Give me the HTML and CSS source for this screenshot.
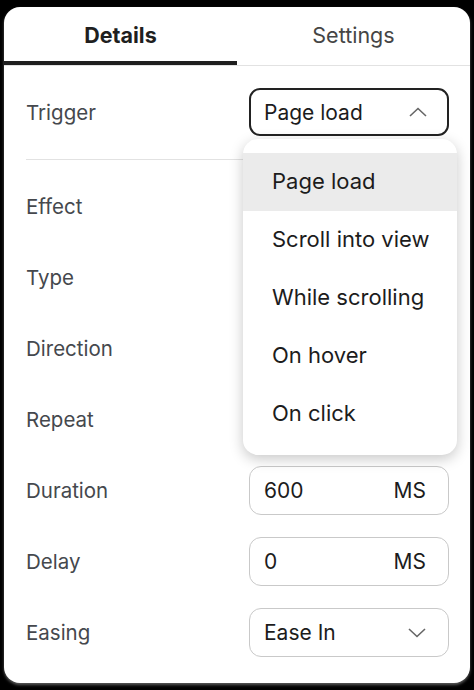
FILE: index.html
```html
<!DOCTYPE html>
<html lang="en">
<head>
    <meta charset="UTF-8">
    <title>Animation panel</title>
    <link rel="stylesheet" href="styles.css">
</head>
<body>
    <div class="panel">
        <div class="tabs">
            <div class="tab active">Details</div>
            <div class="tab">Settings</div>
        </div>

        <div class="form">
            <!-- Trigger mit offenem Menue -->
            <div class="row trigger-row">
                <span class="label">Trigger</span>
                <div class="select-wrap">
                    <div class="select open">
                        <span>Page load</span>
                        <svg class="chevron" width="18" height="10" viewBox="0 0 18 10">
                            <path d="M1 9 L9 1.5 L17 9" fill="none" stroke="#666" stroke-width="1.6"/>
                        </svg>
                    </div>
                    <ul class="menu">
                        <li class="selected">Page load</li>
                        <li>Scroll into view</li>
                        <li>While scrolling</li>
                        <li>On hover</li>
                        <li>On click</li>
                    </ul>
                </div>
            </div>

            <div class="row"><span class="label">Effect</span></div>
            <div class="row"><span class="label">Type</span></div>
            <div class="row"><span class="label">Direction</span></div>
            <div class="row"><span class="label">Repeat</span></div>

            <div class="row">
                <span class="label">Duration</span>
                <div class="field"><span>600</span><span>MS</span></div>
            </div>
            <div class="row">
                <span class="label">Delay</span>
                <div class="field"><span>0</span><span>MS</span></div>
            </div>
            <div class="row">
                <span class="label">Easing</span>
                <div class="field">
                    <span>Ease In</span>
                    <svg class="chevron" width="18" height="10" viewBox="0 0 18 10">
                        <path d="M1 1 L9 8.5 L17 1" fill="none" stroke="#666" stroke-width="1.6"/>
                    </svg>
                </div>
            </div>
        </div>
    </div>
</body>
</html>
```

FILE: styles.css
```css
body {
    margin: 0;
    padding: 7px 4px;
    background: #000;
    font-family: 'Inter', 'Roboto', sans-serif;
    color: #1c1c1c;
}
.panel {
    width: 466px;
    height: 676px;
    background: #fff;
    border-radius: 16px;
    box-shadow: 0 2px 3px rgba(255, 255, 255, 0.35);
}
.tabs {
    display: flex;
    border-bottom: 1px solid #e2e2e2;
}
.tab {
    flex: 1;
    height: 54px;
    line-height: 57px;
    text-align: center;
    font-size: 21.5px;
    color: #454545;
    border-bottom: 4px solid transparent;
}
.tab.active {
    font-weight: 700;
    color: #1f1f1f;
    border-bottom-color: #1f1f1f;
}
.form {
    padding: 0 21px 0 22px;
}
.row {
    display: flex;
    align-items: center;
    justify-content: space-between;
    height: 71px;
}
.label {
    font-size: 20.5px;
    color: #45484d;
}
.trigger-row {
    height: 48px;
    padding: 22px 0 23px;
    border-bottom: 1px solid #e2e2e2;
    margin-bottom: 11px;
}
.select-wrap {
    position: relative;
}
.select, .field {
    box-sizing: border-box;
    width: 200px;
    display: flex;
    align-items: center;
    justify-content: space-between;
    font-size: 21px;
    color: #1c1c1c;
}
.select {
    height: 48px;
    padding: 0 20px 0 13px;
    border: 2px solid #222;
    border-radius: 11px;
}
.field {
    height: 49px;
    padding: 0 22px 0 14px;
    border: 1px solid #c9c9c9;
    border-radius: 12px;
}
.chevron {
    display: block;
}
.menu {
    position: absolute;
    top: 51px;
    left: -6px;
    width: 214px;
    margin: 0;
    padding: 14px 0 12px;
    list-style: none;
    background: #fff;
    border-radius: 15px;
    box-shadow: 0 4px 14px rgba(0, 0, 0, 0.22);
    z-index: 2;
}
.menu li {
    height: 58px;
    line-height: 56px;
    padding-left: 29px;
    font-size: 22px;
    color: #1c1c1c;
}
.menu li.selected {
    background: #ebebeb;
}
```
